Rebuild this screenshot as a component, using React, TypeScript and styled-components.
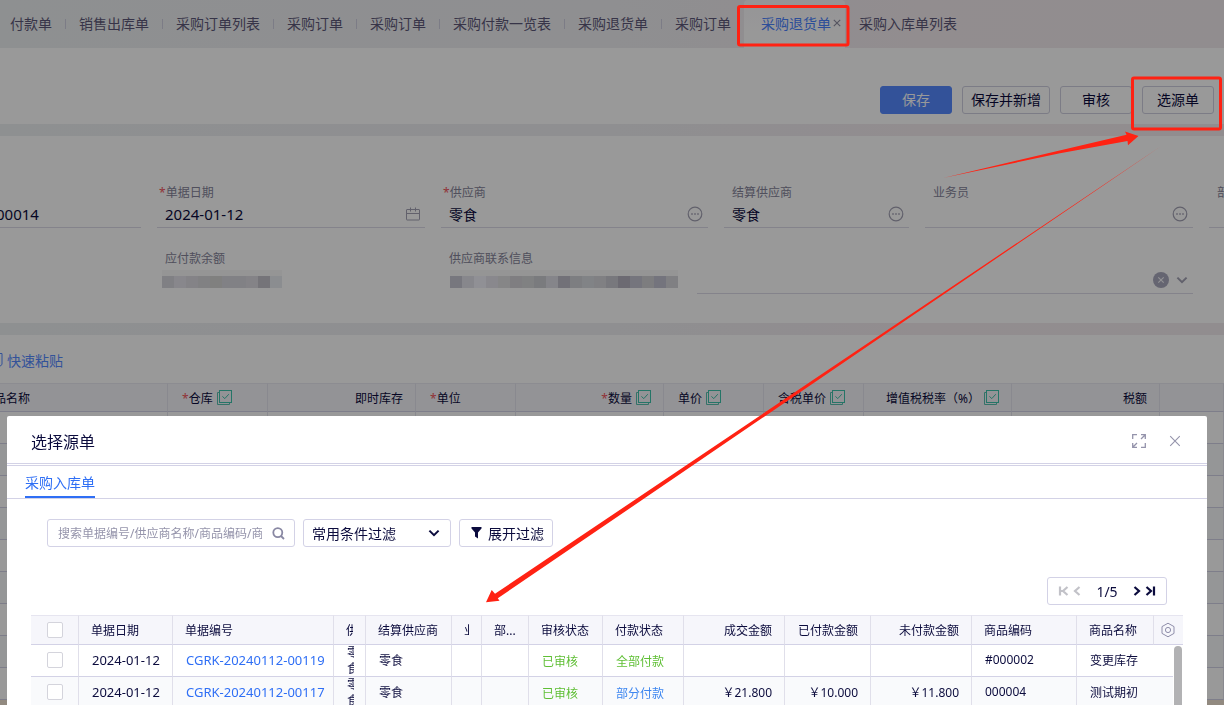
import React from "react";
import styled, { createGlobalStyle, css } from "styled-components";

const ink = "#0b0b3d";
const blue = "#2f6ff5";
const line = "#d3d2e6";
const red = "#ff2213";

const GlobalStyle = createGlobalStyle`
  * { box-sizing: border-box; }
  html, body { margin: 0; height: 100%; overflow: hidden; }
  body, button, input, select {
    font-family: "Noto Sans", "Noto Sans CJK SC", sans-serif;
    color: ${ink};
  }
`;

/* ---------- page behind the dialog ---------- */

const Page = styled.div`
  min-height: 100vh;
  overflow: hidden;
  background: linear-gradient(90deg, #edf0f2 0%, #eeeef2 50%, #f3ebef 75%, #f2ecef 100%);
`;

const TabBar = styled.nav`
  display: flex;
  height: 48px;
  white-space: nowrap;
`;

const PageTab = styled.a<{ $divider?: boolean; $inset?: number }>`
  display: flex;
  align-items: center;
  flex: none;
  padding: 0 13px 2px ${(p) => p.$inset ?? 14}px;
  font-size: 14px;
  color: #5d5878;
  text-decoration: none;
  ${(p) =>
    p.$divider &&
    css`
      background: linear-gradient(#cfcfe0, #cfcfe0) left center / 1px 10px no-repeat;
    `}
`;

const ActiveTab = styled.div`
  display: flex;
  align-items: center;
  flex: none;
  gap: 2px;
  padding: 0 4px 2px 17px;
  border-radius: 4px 4px 0 0;
  background: linear-gradient(#faf9fb, #ffffff);
  color: #8d8ca0;
  a {
    font-size: 14px;
    color: #4a82ff;
    text-decoration: none;
  }
`;

const IconButton = styled.button`
  display: inline-flex;
  align-items: center;
  justify-content: center;
  padding: 0;
  border: 0;
  background: none;
  color: inherit;
`;

const ActionBar = styled.div`
  display: flex;
  justify-content: flex-end;
  gap: 10px;
  padding: 38px 10px 10px;
  background: #fff;
`;

const ActionButton = styled.button<{ $primary?: boolean }>`
  min-width: 72px;
  height: 28px;
  padding: 0 8px;
  border: 1px solid ${(p) => (p.$primary ? "#5589ff" : "#cfcfdf")};
  border-radius: 3px;
  background: ${(p) => (p.$primary ? "#5589ff" : "#fff")};
  color: ${(p) => (p.$primary ? "#fff" : ink)};
  font-size: 14px;
  line-height: 26px;
`;

const FormPanel = styled.section`
  display: grid;
  grid-template-columns: 141fr 268fr 267fr 185fr 268fr 15fr;
  column-gap: 16px;
  row-gap: 20px;
  margin: 12px 0;
  padding: 46px 0 29px;
  background: #fff;
`;

const FieldBox = styled.div<{ $plain?: boolean; $clipped?: boolean; $wide?: boolean }>`
  min-width: 0;
  height: 46px;
  padding: 3px 5px 0 8px;
  border-bottom: 1px solid ${(p) => (p.$plain ? "transparent" : "#dcdbe8")};
  ${(p) => p.$clipped && "margin-left: -12px;"}
  ${(p) =>
    p.$wide &&
    css`
      grid-column: span 3;
      border-image: linear-gradient(90deg, transparent 256px, #dcdbe8 256px) 1;
    `}
`;

const FieldLabel = styled.label<{ $required?: boolean }>`
  display: block;
  height: 16px;
  margin-left: ${(p) => (p.$required ? "-6px" : "0")};
  font-size: 12px;
  line-height: 16px;
  white-space: nowrap;
  color: #85849a;
`;

const Star = styled.span`
  color: #f2545c;
`;

const FieldRow = styled.div`
  display: flex;
  align-items: center;
  gap: 7px;
  height: 26px;
  color: #a3a2b4;
`;

const FieldInput = styled.input<{ $latin?: boolean }>`
  flex: 1;
  min-width: 0;
  width: 100%;
  padding: 0 0 1px;
  border: 0;
  outline: 0;
  background: none;
  font-size: ${(p) => (p.$latin ? 15 : 14)}px;
`;

const Mosaic = styled.div<{ $lead?: boolean }>`
  display: flex;
  flex: none;
  height: 12px;
  margin: 3px 0 0 ${(p) => (p.$lead ? "-3px" : "1px")};
  box-shadow: 0 -6px 0 #f8f8f9;
`;

const Block = styled.i<{ $tone: string }>`
  width: 12px;
  background: ${(p) => p.$tone};
`;

const Spacer = styled.span`
  flex: 1;
`;

const DetailPanel = styled.section`
  overflow: hidden;
  background: #fff;
`;

const PasteButton = styled.button`
  display: flex;
  align-items: center;
  gap: 4px;
  height: 48px;
  margin-left: -11px;
  padding: 2px 0 0;
  border: 0;
  background: none;
  font-size: 14px;
  color: #558aff;
`;

const DetailTable = styled.table`
  table-layout: fixed;
  width: calc(100% + 29px);
  margin-left: -29px;
  border-collapse: separate;
  border-spacing: 0;
  th {
    height: 29px;
    padding: 0 12px;
    border-top: 1px solid #e9e9f2;
    border-right: 1px solid #e4e4ee;
    border-bottom: 1px solid ${line};
    background: #f6f6fa;
    font-size: 12px;
    font-weight: 400;
    white-space: nowrap;
    overflow: hidden;
  }
  th:first-child {
    padding-left: 9px;
  }
  td {
    height: 32px;
    padding: 0;
    border-right: 1px solid #e4e4ee;
    border-bottom: 1px solid ${line};
  }
  tbody tr:nth-child(even) td {
    background: #f9fafc;
  }
`;

const HeadCell = styled.span<{ $end?: boolean }>`
  display: flex;
  align-items: center;
  justify-content: ${(p) => (p.$end ? "flex-end" : "flex-start")};
  gap: 4px;
  padding-left: 2px;
`;

const FooterStrip = styled.div`
  height: 24px;
  background: #f3e6d6;
`;

/* ---------- dialog ---------- */

const Mask = styled.div`
  position: fixed;
  inset: 0;
  display: flex;
  padding: 416px 17px 0 7px;
  background: rgba(0, 0, 0, 0.4);
`;

const Dialog = styled.section`
  flex: 1;
  min-width: 0;
  overflow: hidden;
  border-radius: 2px 2px 0 0;
  background: #fff;
`;

const DialogHead = styled.header`
  display: flex;
  align-items: center;
  gap: 23px;
  height: 50px;
  padding: 2px 26px 0 24px;
  border-bottom: 3px double ${line};
  color: #9493ab;
  h2 {
    flex: 1;
    margin: 0;
    font-size: 16px;
    font-weight: 400;
    color: ${ink};
  }
`;

const DialogTabs = styled.nav`
  display: flex;
  height: 33px;
  padding: 0 18px;
  border-bottom: 1px solid ${line};
  a {
    height: 32px;
    border-bottom: 2px solid ${blue};
    font-size: 14px;
    line-height: 34px;
    color: ${blue};
    text-decoration: none;
  }
`;

const FilterBar = styled.div`
  display: flex;
  gap: 8px;
  padding: 20px 40px 0;
`;

const control = css`
  display: flex;
  align-items: center;
  height: 28px;
  border: 1px solid ${line};
  border-radius: 3px;
  background: #fff;
`;

const SearchBox = styled.div`
  ${control}
  width: 248px;
  gap: 10px;
  padding: 0 9px 0 10px;
  color: #8988a3;
  input {
    flex: 1;
    min-width: 0;
    padding: 0;
    border: 0;
    outline: 0;
    font-size: 12px;
  }
  input::placeholder {
    color: #9594ab;
    opacity: 1;
  }
`;

const SelectBox = styled.div`
  ${control}
  width: 148px;
  padding: 0 10px 0 8px;
  select {
    flex: 1;
    min-width: 0;
    padding: 0;
    border: 0;
    outline: 0;
    appearance: none;
    background: none;
    font-size: 14px;
  }
`;

const FilterButton = styled.button`
  ${control}
  gap: 6px;
  padding: 0 8px 0 11px;
  font-size: 14px;
`;

const PagerRow = styled.div`
  display: flex;
  justify-content: flex-end;
  padding: 30px 40px 10px;
`;

const Pager = styled.div`
  ${control}
  justify-content: space-between;
  width: 120px;
  padding: 0 10px;
  font-size: 14px;
`;

const PagerGroup = styled.span<{ $off?: boolean }>`
  display: flex;
  gap: 4px;
  color: ${(p) => (p.$off ? "#c2c2c8" : ink)};
`;

const GridArea = styled.div`
  position: relative;
  margin: 0 24px;
`;

const SourceTable = styled.table`
  table-layout: fixed;
  width: 100%;
  border-collapse: separate;
  border-spacing: 0;
  th,
  td {
    overflow: hidden;
    white-space: nowrap;
    text-align: left;
    border-right: 1px solid #e0dfea;
    border-bottom: 1px solid ${line};
  }
  th {
    height: 30px;
    padding: 0 12px 1px;
    border-top: 1px solid #e6e5f0;
    background: #f6f6fb;
    font-size: 12px;
    font-weight: 400;
  }
  td {
    height: 32px;
    padding: 0 13px 2px;
    font-size: 12px;
  }
  td:first-child {
    padding-left: 12px;
  }
  th:last-child,
  td:last-child {
    border-right: 0;
  }
  tbody tr:nth-child(even) td {
    background: #f9fafc;
  }
`;

const StatusCell = styled.td<{ $tone: string }>`
  && {
    padding-bottom: 0;
    color: ${(p) => p.$tone};
  }
`;

const SettingsCell = styled.th`
  && {
    padding: 0 0 0 7px;
  }
  ${IconButton} {
    display: flex;
  }
`;

const Clip = styled.span<{ $w: number }>`
  display: block;
  width: ${(p) => p.$w}px;
  overflow: hidden;
`;

const Stack = styled.span`
  display: block;
  width: 7px;
  height: 29px;
  overflow: hidden;
  font-size: 12px;
  line-height: 16px;
  white-space: normal;
  word-break: break-all;
`;

const Latin = styled.span`
  font-size: 13px;
`;

const DocLink = styled.a`
  font-size: 13px;
  color: ${blue};
  text-decoration: none;
`;

const Amount = styled.span`
  display: block;
  margin-right: -1px;
  text-align: right;
`;

const HeadAmount = styled.span`
  display: block;
  text-align: right;
`;

const Tick = styled.input`
  display: block;
  width: 16px;
  height: 16px;
  margin: 0 0 0 4px;
  appearance: none;
  border: 1px solid #d4d4dc;
  border-radius: 2px;
  background: #fff;
`;

const Track = styled.div`
  position: absolute;
  top: 30px;
  right: 0;
  bottom: 0;
  width: 10px;
  padding: 1px 1px 0;
  background: #fff;
`;

const Thumb = styled.div`
  height: 160px;
  border-radius: 4px;
  background: #b2b2b4;
`;

const Annotations = styled.svg`
  position: fixed;
  top: 0;
  left: 0;
  pointer-events: none;
`;

/* ---------- icons ---------- */

type IconProps = { size?: number };

const CrossIcon = ({ size = 8 }: IconProps) => (
  <svg width={size} height={size} viewBox="0 0 10 10" fill="none" stroke="currentColor" strokeWidth={11 / size}>
    <path d="M1 1l8 8M9 1l-8 8" />
  </svg>
);

const CalendarIcon = () => (
  <svg width="14" height="14" viewBox="0 0 14 14" fill="none" stroke="currentColor">
    <rect x="0.5" y="2.5" width="13" height="10.5" rx="0.5" />
    <path d="M0.5 6.5h13M4.5 0.5v4M9.5 0.5v4" />
  </svg>
);

const DotsIcon = () => (
  <svg width="16" height="16" viewBox="0 0 16 16" fill="none" stroke="currentColor">
    <circle cx="8" cy="8" r="6.8" strokeWidth="1.2" />
    <path d="M4.2 8h1.6M7.2 8h1.6M10.2 8h1.6" strokeWidth="1.6" />
  </svg>
);

const ClearIcon = () => (
  <svg width="16" height="16" viewBox="0 0 16 16">
    <circle cx="8" cy="8" r="8" fill="#a9a9bd" />
    <path d="M5.3 5.3l5.400 5.400M10.700 5.300l-5.400 5.400" stroke="#f4f4f8" strokeWidth="1.1" />
  </svg>
);

const ChevronDown = ({ size = 12 }: IconProps) => (
  <svg width={size} height={size} viewBox="0 0 12 12" fill="none" stroke="currentColor" strokeWidth="2">
    <path d="M1.400 3.600L6 8.200l4.600-4.600" />
  </svg>
);

const BatchIcon = () => (
  <svg width="15" height="15" viewBox="0 0 15 15" fill="none" stroke="#3fc4ac">
    <path d="M2.5 2.5h-2v12h12v-2" stroke="#58bfae" />
    <rect x="2.5" y="0.5" width="12" height="12" />
    <path d="M5.4 6.4l2.4 2.2 4-4.4" />
  </svg>
);

const PasteIcon = () => (
  <svg width="14" height="16" viewBox="0 0 14 16" fill="none" stroke="currentColor">
    <path d="M4.5 2.5h-4v12h5M7 1.5h6v11l-3 2.500h-5v-13.500z" />
  </svg>
);

const ExpandIcon = () => (
  <svg width="14" height="14" viewBox="0 0 14 14" fill="none" stroke="currentColor" strokeWidth="1.3">
    <path d="M0.7 5V0.7H5M13.3 9v4.3H9" />
    <path d="M9 0.7h4.3V5M13.3 0.7L9 5M5 13.3H0.7V9M0.7 13.3L5 9" />
  </svg>
);

const SearchIcon = () => (
  <svg width="13" height="13" viewBox="0 0 13 13" fill="none" stroke="currentColor" strokeWidth="1.8">
    <circle cx="5.8" cy="5.600" r="4.500" />
    <path d="M9 9l3 3" />
  </svg>
);

const FunnelIcon = () => (
  <svg width="11" height="12" viewBox="0 0 11 12" fill="currentColor">
    <path d="M0.5 0h10v1.400L7 5.500v6L4 9.500V5.500L0.500 1.400z" />
  </svg>
);

const PagerIcon = ({ d, width }: { d: string; width: number }) => (
  <svg width={width} height="10" viewBox={`0 0 ${width} 10`} fill="none" stroke="currentColor" strokeWidth="2.200">
    <path d={d} />
  </svg>
);

const GearIcon = () => (
  <svg width="14" height="16" viewBox="0 0 14 16" fill="none" stroke="#8f8eaa">
    <path d="M7 1.2l6 3.4v6.8l-6 3.4-6-3.4V4.6z" strokeLinejoin="round" />
    <circle cx="7" cy="8" r="2.6" />
  </svg>
);

/* ---------- data ---------- */

const openTabs = ["付款单", "销售出库单", "采购订单列表", "采购订单", "采购订单", "采购付款一览表", "采购退货单", "采购订单"];

const payableTones = ["#d6d5dc", "#e3e2e9", "#dcdbe2", "#d8d8da", "#d6d6d4", "#d8d7de", "#d8d7de", "#dcdbe2", "#c3c2ca", "#e8ecf1"];

const contactTones = [
  "#c6c7d2", "#e2e1ea", "#f0f1f8", "#e4e3ec", "#e0e0e1", "#d4d3d8", "#d6d7d9", "#ccced3", "#dedee6", "#bfbcc9",
  "#d0d2d8", "#d8dbe0", "#d6d6da", "#c8c8d0", "#b4b1be", "#c4c4d0", "#d0d0d4", "#c2c2d0", "#d6d6da",
];

type DetailColumn = { name: string; width?: number; required?: boolean; end?: boolean; batch?: boolean };

const detailColumns: DetailColumn[] = [
  { name: "商品名称", width: 197 },
  { name: "仓库", width: 100, required: true, batch: true },
  { name: "即时库存", width: 148, end: true },
  { name: "单位", width: 100, required: true },
  { name: "数量", width: 148, required: true, end: true, batch: true },
  { name: "单价", width: 100, batch: true },
  { name: "含税单价", width: 100, batch: true },
  { name: "增值税税率（%）", width: 148, end: true, batch: true },
  { name: "税额", width: 148, end: true },
  { name: "" },
];

const sourceWidths = [48, 94, 161, 32, 86, 30, 47, 74, 81, 101, 86, 101, 105, 77, 29];

const green = "#5fbf35";
const sky = "#3d86f0";

const sourceRows = [
  { date: "2024-01-12", no: "CGRK-20240112-00119", supplier: "零食", pay: "全部付款", payTone: green, total: "", paid: "", unpaid: "", code: "#000002", name: "变更库存" },
  { date: "2024-01-12", no: "CGRK-20240112-00117", supplier: "零食", pay: "部分付款", payTone: sky, total: "￥21.800", paid: "￥10.000", unpaid: "￥11.800", code: "000004", name: "测试期初" },
];

/* ---------- parts ---------- */

type FieldProps = {
  id: string;
  label: string;
  value?: string;
  required?: boolean;
  latin?: boolean;
  clipped?: boolean;
  icon?: React.ReactNode;
};

const Field = ({ id, label, value = "", required, latin, clipped, icon }: FieldProps) => (
  <FieldBox $clipped={clipped}>
    <FieldLabel htmlFor={id} $required={required}>
      {required && <Star>*</Star>}
      {label}
    </FieldLabel>
    <FieldRow>
      <FieldInput id={id} defaultValue={value} $latin={latin} />
      {icon}
    </FieldRow>
  </FieldBox>
);

export default function App() {
  return (
    <>
      <GlobalStyle />
      <Page>
        <TabBar>
          {openTabs.map((name, i) => (
            <PageTab key={i} href="#" $divider={i > 0} $inset={i === 0 ? 10 : undefined}>
              {name}
            </PageTab>
          ))}
          <ActiveTab>
            <a href="#">采购退货单</a>
            <IconButton aria-label="关闭标签">
              <CrossIcon />
            </IconButton>
          </ActiveTab>
          <PageTab href="#">采购入库单列表</PageTab>
        </TabBar>

        <ActionBar>
          <ActionButton $primary>保存</ActionButton>
          <ActionButton>保存并新增</ActionButton>
          <ActionButton>审核</ActionButton>
          <ActionButton>选源单</ActionButton>
        </ActionBar>

        <FormPanel>
          <Field id="doc-no" label="" value="00014" latin clipped />
          <Field id="doc-date" label="单据日期" value="2024-01-12" required latin icon={<CalendarIcon />} />
          <Field id="supplier" label="供应商" value="零食" required icon={<DotsIcon />} />
          <Field id="settle" label="结算供应商" value="零食" icon={<DotsIcon />} />
          <Field id="staff" label="业务员" icon={<DotsIcon />} />
          <Field id="dept" label="部门" />

          <span />
          <FieldBox $plain>
            <FieldLabel as="span">应付款余额</FieldLabel>
            <FieldRow>
              <Mosaic $lead>
                {payableTones.map((tone, i) => (
                  <Block key={i} $tone={tone} />
                ))}
              </Mosaic>
            </FieldRow>
          </FieldBox>
          <FieldBox $wide>
            <FieldLabel as="span">供应商联系信息</FieldLabel>
            <FieldRow>
              <Mosaic>
                {contactTones.map((tone, i) => (
                  <Block key={i} $tone={tone} />
                ))}
              </Mosaic>
              <Spacer />
              <IconButton aria-label="清除">
                <ClearIcon />
              </IconButton>
              <IconButton aria-label="展开">
                <ChevronDown />
              </IconButton>
            </FieldRow>
          </FieldBox>
        </FormPanel>

        <DetailPanel>
          <PasteButton>
            <PasteIcon />
            快速粘贴
          </PasteButton>
          <DetailTable>
            <colgroup>
              {detailColumns.map((c, i) => (
                <col key={i} width={c.width} />
              ))}
            </colgroup>
            <thead>
              <tr>
                {detailColumns.map((c, i) => (
                  <th key={i}>
                    <HeadCell $end={c.end}>
                      <span>
                        {c.required && <Star>*</Star>}
                        {c.name}
                      </span>
                      {c.batch && <BatchIcon />}
                    </HeadCell>
                  </th>
                ))}
              </tr>
            </thead>
            <tbody>
              {Array.from({ length: 9 }, (_, r) => (
                <tr key={r}>
                  {detailColumns.map((_c, i) => (
                    <td key={i} />
                  ))}
                </tr>
              ))}
            </tbody>
          </DetailTable>
        </DetailPanel>
        <FooterStrip />
      </Page>

      <Mask>
        <Dialog role="dialog" aria-label="选择源单">
          <DialogHead>
            <h2>选择源单</h2>
            <IconButton aria-label="全屏">
              <ExpandIcon />
            </IconButton>
            <IconButton aria-label="关闭">
              <CrossIcon size={12} />
            </IconButton>
          </DialogHead>
          <DialogTabs>
            <a href="#">采购入库单</a>
          </DialogTabs>
          <FilterBar>
            <SearchBox>
              <input aria-label="搜索" placeholder="搜索单据编号/供应商名称/商品编码/商品名称" />
              <SearchIcon />
            </SearchBox>
            <SelectBox>
              <select aria-label="常用条件过滤">
                <option>常用条件过滤</option>
              </select>
              <ChevronDown />
            </SelectBox>
            <FilterButton>
              <FunnelIcon />
              展开过滤
            </FilterButton>
          </FilterBar>
          <PagerRow>
            <Pager>
              <PagerGroup $off>
                <IconButton aria-label="首页">
                  <PagerIcon width={11} d="M2 0.5v9M9.5 1L5 5l4.500 4M2 5h3" />
                </IconButton>
                <IconButton aria-label="上一页">
                  <PagerIcon width={8} d="M6.5 1L2 5l4.500 4" />
                </IconButton>
              </PagerGroup>
              1/5
              <PagerGroup>
                <IconButton aria-label="下一页">
                  <PagerIcon width={8} d="M1.500 1L6 5l-4.500 4" />
                </IconButton>
                <IconButton aria-label="末页">
                  <PagerIcon width={11} d="M1.500 1L6 5l-4.500 4M9 0.5v9" />
                </IconButton>
              </PagerGroup>
            </Pager>
          </PagerRow>
          <GridArea>
            <SourceTable>
              <colgroup>
                {sourceWidths.map((w, i) => (
                  <col key={i} width={w} />
                ))}
              </colgroup>
              <thead>
                <tr>
                  <th>
                    <Tick type="checkbox" aria-label="全选" />
                  </th>
                  <th>单据日期</th>
                  <th>单据编号</th>
                  <th>
                    <Clip $w={7}>供</Clip>
                  </th>
                  <th>结算供应商</th>
                  <th>
                    <Clip $w={5}>业</Clip>
                  </th>
                  <th>部...</th>
                  <th>审核状态</th>
                  <th>付款状态</th>
                  <th>
                    <HeadAmount>成交金额</HeadAmount>
                  </th>
                  <th>
                    <HeadAmount>已付款金额</HeadAmount>
                  </th>
                  <th>
                    <HeadAmount>未付款金额</HeadAmount>
                  </th>
                  <th>商品编码</th>
                  <th>商品名称</th>
                  <SettingsCell>
                    <IconButton aria-label="列设置">
                      <GearIcon />
                    </IconButton>
                  </SettingsCell>
                </tr>
              </thead>
              <tbody>
                {sourceRows.map((r) => (
                  <tr key={r.no}>
                    <td>
                      <Tick type="checkbox" aria-label={r.no} />
                    </td>
                    <td>
                      <Latin>{r.date}</Latin>
                    </td>
                    <td>
                      <DocLink href="#">{r.no}</DocLink>
                    </td>
                    <td>
                      <Stack>{r.supplier}</Stack>
                    </td>
                    <td>{r.supplier}</td>
                    <td />
                    <td />
                    <StatusCell $tone={green}>已审核</StatusCell>
                    <StatusCell $tone={r.payTone}>{r.pay}</StatusCell>
                    <td>
                      <Amount>{r.total}</Amount>
                    </td>
                    <td>
                      <Amount>{r.paid}</Amount>
                    </td>
                    <td>
                      <Amount>{r.unpaid}</Amount>
                    </td>
                    <td>{r.code}</td>
                    <td colSpan={2}>{r.name}</td>
                  </tr>
                ))}
              </tbody>
            </SourceTable>
            <Track>
              <Thumb />
            </Track>
          </GridArea>
        </Dialog>
      </Mask>

      <Annotations width="1224" height="705" viewBox="0 0 1224 705" aria-hidden="true">
        <g fill="none" stroke={red} strokeWidth="3">
          <rect x="738.5" y="6.5" width="109.5" height="38.5" rx="1.5" />
          <rect x="1132.5" y="78" width="88" height="51" rx="1.5" />
        </g>
        <g fill={red}>
          <path d="M943 178L1126.5 134.8L1125 131.5L1138.5 136L1128 145.3L1127.5 141L1060 153.3Z" />
          <path d="M1162 145.5L495 593.8L491.7 590L486 602.2L499.5 600.8L497.8 598.3Z" />
        </g>
      </Annotations>
    </>
  );
}
